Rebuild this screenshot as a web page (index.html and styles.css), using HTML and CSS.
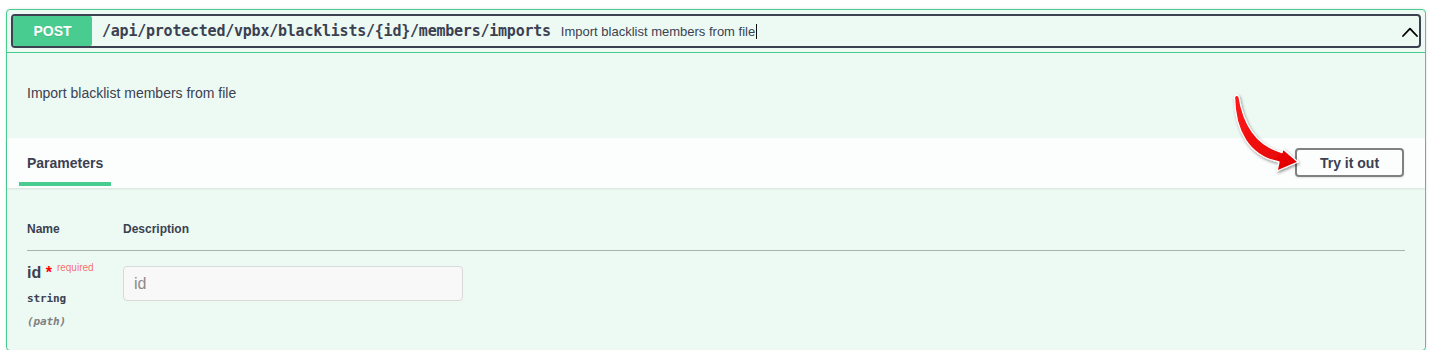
FILE: index.html
```html
<!DOCTYPE html>
<html>
<head>
<meta charset="utf-8">
<link rel="stylesheet" href="styles.css">
</head>
<body>
<div class="page">
  <div class="opblock">
    <div class="summary-wrap">
      <div class="summary">
        <span class="method">POST</span>
        <span class="path">/api/protected/vpbx/blacklists/{id}/members/imports</span>
        <span class="summary-desc">Import blacklist members from file<span class="caret"></span></span>
        <svg class="chevron" width="16" height="11" viewBox="0 0 16 11"><polyline points="1,10 8,2.6 15,10" fill="none" stroke="#000" stroke-width="1.8" stroke-linecap="round" stroke-linejoin="round"/></svg>
      </div>
    </div>
    <div class="body">
      <div class="desc">Import blacklist members from file</div>
      <div class="section-header">
        <div class="tab">Parameters</div>
        <button class="try">Try it out</button>
      </div>
      <div class="table-container">
        <table class="params">
          <thead>
            <tr><th class="col-name">Name</th><th>Description</th></tr>
          </thead>
          <tbody>
            <tr>
              <td class="col-name">
                <div class="pname">id<span class="star">&nbsp;*</span><span class="req">required</span></div>
                <div class="ptype">string</div>
                <div class="pin">(path)</div>
              </td>
              <td><input class="pinput" type="text" placeholder="id"></td>
            </tr>
          </tbody>
        </table>
      </div>
    </div>
  </div>
  <svg class="annotation" width="1431" height="350" viewBox="0 0 1431 350">
    <defs>
      <filter id="sh" x="-20%" y="-20%" width="140%" height="140%">
        <feDropShadow dx="1" dy="1.5" stdDeviation="1.5" flood-color="#000" flood-opacity="0.45"/>
      </filter>
      <linearGradient id="rg" x1="0" y1="0" x2="1" y2="1">
        <stop offset="0" stop-color="#ff1a1a"/>
        <stop offset="1" stop-color="#e00000"/>
      </linearGradient>
    </defs>
    <path filter="url(#sh)" fill="url(#rg)" stroke="#fff" stroke-width="1.3" stroke-linejoin="round"
      d="M1234.5,97 C1235,131 1249,156 1279,162 L1277,171 L1298,162 L1283,149 L1282,152.5 C1258,146 1244,127 1239,97 Q1236.8,93 1234.5,97 Z"/>
  </svg>
</div>
</body>
</html>
```

FILE: styles.css
```css
html, body {
  margin: 0;
  padding: 0;
  background: #fff;
}
body {
  font-family: "Liberation Sans", Arial, sans-serif;
  color: #3b4151;
}
.page {
  position: relative;
  padding: 9px 5px 0 6px;
  width: 1431px;
  height: 350px;
  box-sizing: border-box;
  overflow: hidden;
}
.opblock {
  border: 1px solid #49cc90;
  border-radius: 4px;
  background: #edfaf4;
  box-shadow: 0 0 3px rgba(0,0,0,.12);
}
.summary-wrap {
  padding: 4px;
  border-bottom: 1px solid #49cc90;
}
.summary {
  display: flex;
  align-items: center;
  height: 30px;
  border: 2px solid #3b4151;
  border-radius: 4px;
}
.method {
  width: 79px;
  height: 30px;
  line-height: 30px;
  background: #49cc90;
  border-radius: 2px;
  color: #fff;
  font-weight: bold;
  font-size: 14px;
  text-align: center;
  text-shadow: 0 1px 0 rgba(0,0,0,.1);
}
.path {
  padding-left: 10px;
  font-family: "DejaVu Sans Mono", monospace;
  font-weight: bold;
  font-size: 15px;
  letter-spacing: -0.23px;
  color: #3b4151;
}
.summary-desc {
  margin-left: 10px;
  font-size: 13px;
  color: #3b4151;
  display: flex;
  align-items: center;
}
.caret {
  display: inline-block;
  width: 1px;
  height: 15px;
  background: #111;
  margin-left: 1px;
}
.chevron {
  margin-left: auto;
  margin-right: 1px;
}
.desc {
  padding: 32px 20px 37px;
  font-size: 14px;
  line-height: 16px;
}
.section-header {
  display: flex;
  align-items: center;
  justify-content: space-between;
  height: 50px;
  box-sizing: border-box;
  padding: 0 21px 0 12px;
  background: rgba(255,255,255,.8);
  box-shadow: 0 1px 2px rgba(0,0,0,.1);
}
.tab {
  align-self: flex-end;
  padding: 16px 8px 10px;
  line-height: 18px;
  font-size: 14px;
  font-weight: bold;
  border-bottom: 4px solid #49cc90;
  margin-bottom: 2px;
}
.try {
  width: 109px;
  height: 29px;
  box-sizing: border-box;
  border: 2px solid #808080;
  border-radius: 4px;
  background: transparent;
  font-family: "Liberation Sans", Arial, sans-serif;
  font-weight: bold;
  font-size: 14px;
  color: #3b4151;
  box-shadow: 0 1px 2px rgba(0,0,0,.1);
  padding: 0;
  margin-top: -1px;
}
.table-container {
  padding: 20px;
}
.params {
  width: 100%;
  border-collapse: collapse;
}
.params th {
  text-align: left;
  font-size: 12px;
  font-weight: bold;
  line-height: 16px;
  padding: 13px 0 13px;
  border-bottom: 1px solid #aab1b3;
}
.params td {
  vertical-align: top;
  padding: 12px 0 0;
}
.col-name {
  width: 96px;
}
.pname {
  font-size: 16px;
  font-weight: bold;
  line-height: 20px;
  height: 20px;
  white-space: nowrap;
}
.star {
  color: #f00;
}
.req {
  font-size: 10px;
  line-height: 0;
  font-weight: normal;
  color: rgba(255,0,0,.6);
  padding-left: 5px;
  vertical-align: 7px;
}
.ptype {
  margin-top: 8px;
  line-height: 16px;
  font-family: "DejaVu Sans Mono", monospace;
  font-weight: bold;
  font-size: 11px;
  letter-spacing: -0.1px;
}
.pin {
  margin-top: 7px;
  line-height: 16px;
  font-family: "DejaVu Sans Mono", monospace;
  font-weight: bold;
  font-style: italic;
  font-size: 11px;
  letter-spacing: -0.1px;
  color: #808080;
}
.pinput {
  display: block;
  margin-top: 3px;
  width: 340px;
  height: 35px;
  box-sizing: border-box;
  border: 1px solid #d9d9d9;
  border-radius: 4px;
  background: #f8f8f8;
  padding: 0 10px;
  font-family: "Liberation Sans", Arial, sans-serif;
  font-size: 16px;
  color: #3b4151;
}
.pinput::placeholder {
  color: #8a8a8a;
}
.annotation {
  position: absolute;
  left: 0;
  top: 0;
  pointer-events: none;
}
```
